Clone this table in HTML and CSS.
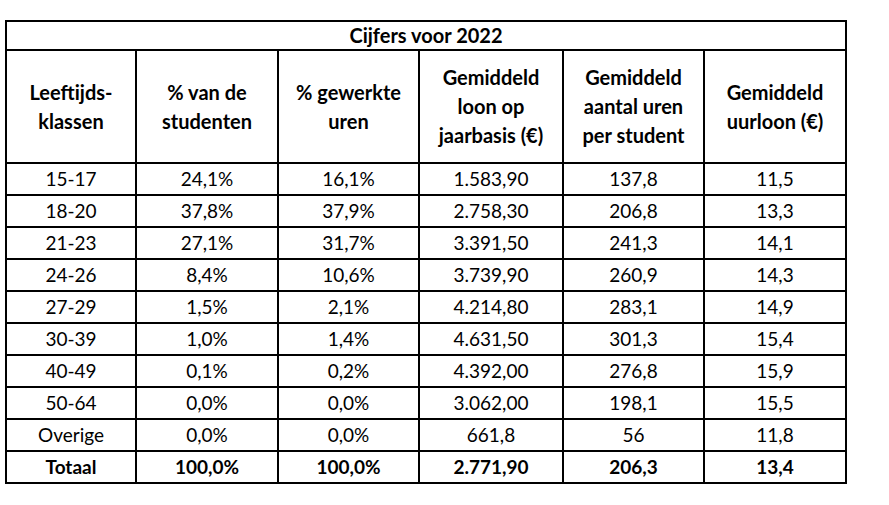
FILE: index.html
```html
<!DOCTYPE html>
<html lang="nl">
<head>
<meta charset="utf-8">
<title>Cijfers voor 2022</title>
<link rel="stylesheet" href="styles.css">
</head>
<body>
<table class="stats">
  <colgroup>
    <col class="c1"><col class="c2"><col class="c3"><col class="c4"><col class="c5"><col class="c6">
  </colgroup>
  <thead>
    <tr class="title-row"><th colspan="6">Cijfers voor 2022</th></tr>
    <tr class="head-row">
      <th>Leeftijds-<br>klassen</th>
      <th>% van de<br>studenten</th>
      <th>% gewerkte<br>uren</th>
      <th>Gemiddeld<br>loon op<br>jaarbasis (€)</th>
      <th>Gemiddeld<br>aantal uren<br>per student</th>
      <th>Gemiddeld<br>uurloon (€)</th>
    </tr>
  </thead>
  <tbody>
    <tr><td>15-17</td><td>24,1%</td><td>16,1%</td><td>1.583,90</td><td>137,8</td><td>11,5</td></tr>
    <tr><td>18-20</td><td>37,8%</td><td>37,9%</td><td>2.758,30</td><td>206,8</td><td>13,3</td></tr>
    <tr><td>21-23</td><td>27,1%</td><td>31,7%</td><td>3.391,50</td><td>241,3</td><td>14,1</td></tr>
    <tr><td>24-26</td><td>8,4%</td><td>10,6%</td><td>3.739,90</td><td>260,9</td><td>14,3</td></tr>
    <tr><td>27-29</td><td>1,5%</td><td>2,1%</td><td>4.214,80</td><td>283,1</td><td>14,9</td></tr>
    <tr><td>30-39</td><td>1,0%</td><td>1,4%</td><td>4.631,50</td><td>301,3</td><td>15,4</td></tr>
    <tr><td>40-49</td><td>0,1%</td><td>0,2%</td><td>4.392,00</td><td>276,8</td><td>15,9</td></tr>
    <tr><td>50-64</td><td>0,0%</td><td>0,0%</td><td>3.062,00</td><td>198,1</td><td>15,5</td></tr>
    <tr><td>Overige</td><td>0,0%</td><td>0,0%</td><td>661,8</td><td>56</td><td>11,8</td></tr>
    <tr class="total-row"><td>Totaal</td><td>100,0%</td><td>100,0%</td><td>2.771,90</td><td>206,3</td><td>13,4</td></tr>
  </tbody>
</table>
</body>
</html>
```
FILE: styles.css
```css
html, body {
  margin: 0;
  padding: 0;
  background: #ffffff;
}

body {
  padding: 20px 0 0 5px;
  font-family: "Lato", "Open Sans", sans-serif;
  font-size: 19px;
  color: #000000;
}

.stats {
  table-layout: fixed;
  width: 842px;
  border-collapse: separate;
  border-spacing: 0;
  border-left: 2px solid #000;
  border-top: 2px solid #000;
}

.c1 { width: 130px; }
.c2 { width: 142px; }
.c3 { width: 141px; }
.c4 { width: 144px; }
.c5 { width: 141px; }
.c6 { width: 142px; }

.stats th,
.stats td {
  box-sizing: border-box;
  padding: 0;
  border-right: 2px solid #000;
  border-bottom: 2px solid #000;
  text-align: center;
  vertical-align: middle;
}

.stats th {
  font-size: 20px;
  font-weight: 700;
}

.title-row th {
  height: 29px;
  line-height: 27px;
}

.head-row th {
  height: 113px;
  line-height: 29px;
}

.stats td {
  height: 32px;
  line-height: 30px;
  font-weight: 400;
}

.total-row td {
  font-weight: 700;
}
```
